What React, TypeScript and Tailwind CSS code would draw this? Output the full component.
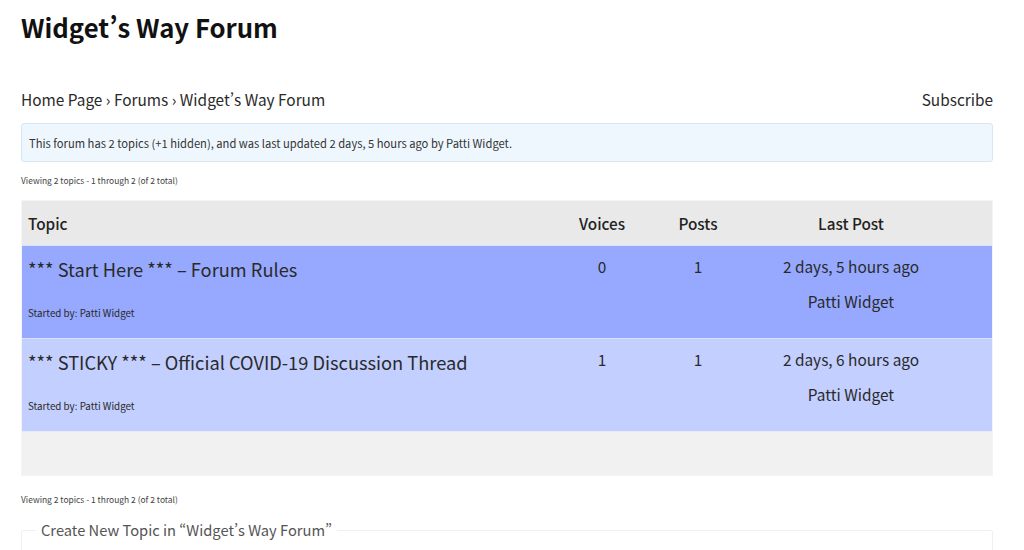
import React from 'react';

const font = { fontFamily: '"Noto Sans CJK SC", "Open Sans", sans-serif' };

const topics = [
  { title: '*** Start Here *** – Forum Rules', voices: 0, posts: 1, ago: '2 days, 5 hours ago', bg: 'bg-[#96a9ff]' },
  { title: '*** STICKY *** – Official COVID-19 Discussion Thread', voices: 1, posts: 1, ago: '2 days, 6 hours ago', bg: 'bg-[#c3cfff]' },
];

const Viewing = () => (
  <p className="text-[8.45px] leading-[14px] text-[#444]">Viewing 2 topics - 1 through 2 (of 2 total)</p>
);

export default function App() {
  return (
    <div lang="en" style={font} className="h-[550px] overflow-hidden bg-white pl-[21px] pr-[31px] text-[#2a2a2a] [font-feature-settings:'pwid']">
      <h1 className="pt-[9px] text-[25.7px] font-semibold leading-[36px] text-[#111]">Widget’s Way Forum</h1>

      <div className="mt-[42px] flex items-center justify-between text-[15.4px] leading-[24px]">
        <div>Home Page › Forums › Widget’s Way Forum</div>
        <div>Subscribe</div>
      </div>

      <div className="mt-[12px] h-[39px] rounded-[3px] border border-[#d5e6f5] bg-[#eff7fe] px-[7px] text-[11.2px] leading-[38px] text-[#333]">
        This forum has 2 topics (+1 hidden), and was last updated 2 days, 5 hours ago by Patti Widget.
      </div>

      <div className="mt-[11px]">
        <Viewing />
      </div>

      <div className="mt-[13px] border border-[#f4f4f4]">
        <div className="flex h-[44px] items-center bg-[#e9e9e9] text-[15.3px] font-medium text-[#222]">
          <div className="flex-1 pl-[6px]">Topic</div>
          <div className="w-[96px] text-center">Voices</div>
          <div className="w-[96px] text-center">Posts</div>
          <div className="w-[246px] pr-[36px] text-center">Last Post</div>
        </div>
        {topics.map((t) => (
          <div key={t.title} className={`flex h-[93px] border-t border-[#dce2fb] ${t.bg}`}>
            <div className="flex-1 pl-[6px]">
              <div className="mt-[9px] text-[18.25px] leading-[28px]">{t.title}</div>
              <div className="mt-[23px] text-[9.8px] leading-[14px]">Started by: Patti Widget</div>
            </div>
            <div className="w-[96px] pt-[7px] text-center text-[15.4px] leading-[26px]">{t.voices}</div>
            <div className="w-[96px] pt-[7px] text-center text-[15.4px] leading-[26px]">{t.posts}</div>
            <div className="w-[246px] pr-[36px] pt-[7px] text-center text-[15.4px] leading-[26px]">
              <div>{t.ago}</div>
              <div className="mt-[9px]">Patti Widget</div>
            </div>
          </div>
        ))}
        <div className="h-[44px] border-t border-[#e6e9f8] bg-[#f1f1f1]" />
      </div>

      <div className="mt-[16px]">
        <Viewing />
      </div>

      <fieldset className="mt-[13px] h-[60px] rounded-[2px] border border-[#f0f0f0] px-[14px]">
        <legend className="px-[5px] text-[14.7px] leading-[22px] text-[#555]">Create New Topic in “Widget’s Way Forum”</legend>
      </fieldset>
    </div>
  );
}
